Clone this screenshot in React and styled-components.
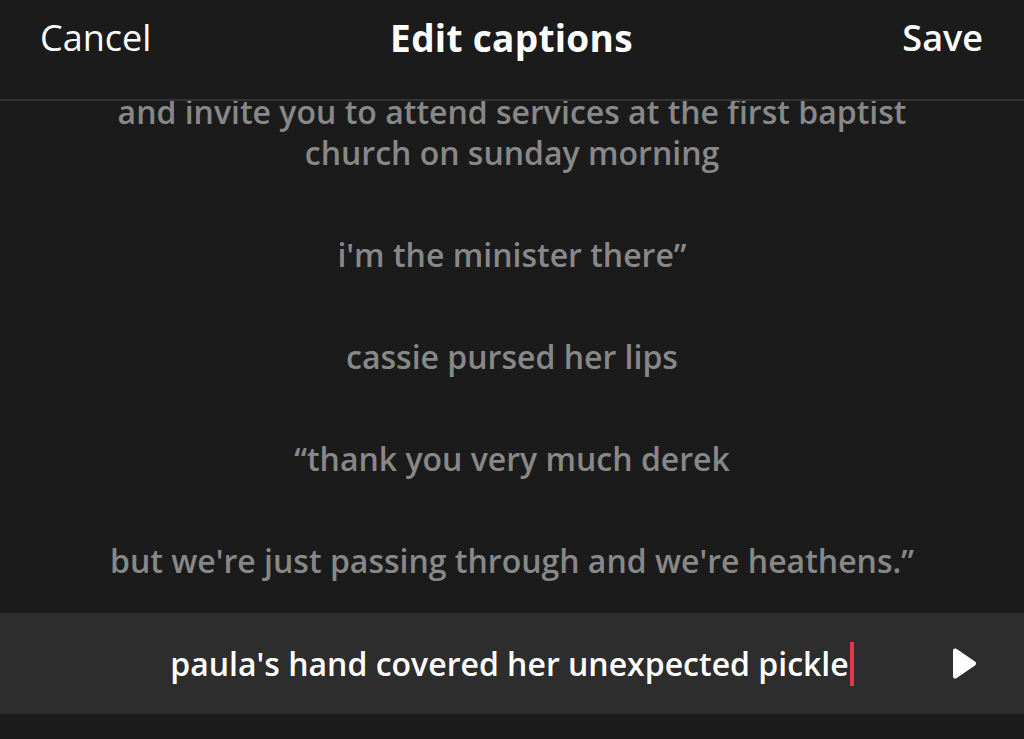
import React from "react";
import styled, { createGlobalStyle } from "styled-components";

const GlobalStyle = createGlobalStyle`
  html, body {
    margin: 0;
    padding: 0;
    background: #1b1b1b;
  }
  * {
    box-sizing: border-box;
  }
`;

const captions = [
  "and invite you to attend services at the first baptist church on sunday morning",
  "i'm the minister there\u201d",
  "cassie pursed her lips",
  "\u201cthank you very much derek",
  "but we're just passing through and we're heathens.\u201d",
];

function App() {
  return (
    <Screen>
      <GlobalStyle />
      <Header>
        <HeaderButton>Cancel</HeaderButton>
        <Title>Edit captions</Title>
        <HeaderButton bold right>
          Save
        </HeaderButton>
      </Header>
      <Scroller>
        <List>
          {captions.map((c, i) => (
            <Caption key={i} wide={i === 0}>
              {c}
            </Caption>
          ))}
        </List>
      </Scroller>
      <ActiveRow>
        <ActiveText>
          paula's hand covered her unexpected pickle
          <Cursor />
        </ActiveText>
        <PlayButton aria-label="play">
          <svg width="27" height="32" viewBox="0 0 27 32">
            <path
              d="M3 2.5 C3 0.8 4.8 -0.2 6.3 0.8 L25 13.6 C26.3 14.5 26.3 16.5 25 17.4 L6.3 30.2 C4.8 31.2 3 30.2 3 28.5 Z"
              fill="#ffffff"
            />
          </svg>
        </PlayButton>
      </ActiveRow>
      <Bottom />
    </Screen>
  );
}

export default App;

const Screen = styled.div`
  width: 1024px;
  height: 739px;
  background: #1b1b1b;
  display: flex;
  flex-direction: column;
  overflow: hidden;
  font-family: "Open Sans", Lato, sans-serif;
  font-variant-ligatures: none;
`;

const Header = styled.div`
  height: 101px;
  flex-shrink: 0;
  display: grid;
  grid-template-columns: 1fr auto 1fr;
  align-items: start;
  padding: 16px 41px 0 40px;
  border-bottom: 2px solid #333333;
`;

const HeaderButton = styled.div`
  font-size: 36px;
  line-height: 44px;
  color: #ffffff;
  font-weight: ${(p) => (p.bold ? 600 : 400)};
  text-align: ${(p) => (p.right ? "right" : "left")};
`;

const Title = styled.div`
  font-size: 37px;
  line-height: 44px;
  font-weight: 700;
  color: #ffffff;
  letter-spacing: 0.3px;
  text-align: center;
`;

const Scroller = styled.div`
  flex: 1;
  overflow: hidden;
`;

const List = styled.div`
  margin-top: -41px;
  display: flex;
  flex-direction: column;
  align-items: center;
`;

const Caption = styled.div`
  padding: 30.5px 0;
  font-size: 32px;
  line-height: 41px;
  font-weight: 600;
  color: #888888;
  text-align: center;
  max-width: ${(p) => (p.wide ? "810px" : "980px")};
`;

const ActiveRow = styled.div`
  height: 101px;
  flex-shrink: 0;
  background: #2d2d2d;
  display: flex;
  align-items: center;
  justify-content: center;
  position: relative;
`;

const ActiveText = styled.div`
  font-size: 32px;
  line-height: 41px;
  font-weight: 600;
  color: #ffffff;
  display: flex;
  align-items: center;
`;

const Cursor = styled.span`
  display: inline-block;
  width: 4px;
  height: 44px;
  margin-left: 1px;
  background: #e8334f;
`;

const PlayButton = styled.div`
  position: absolute;
  right: 47px;
  top: 50%;
  transform: translateY(-50%);
  display: flex;
`;

const Bottom = styled.div`
  flex: 0 0 25px;
  background: #1b1b1b;
`;
